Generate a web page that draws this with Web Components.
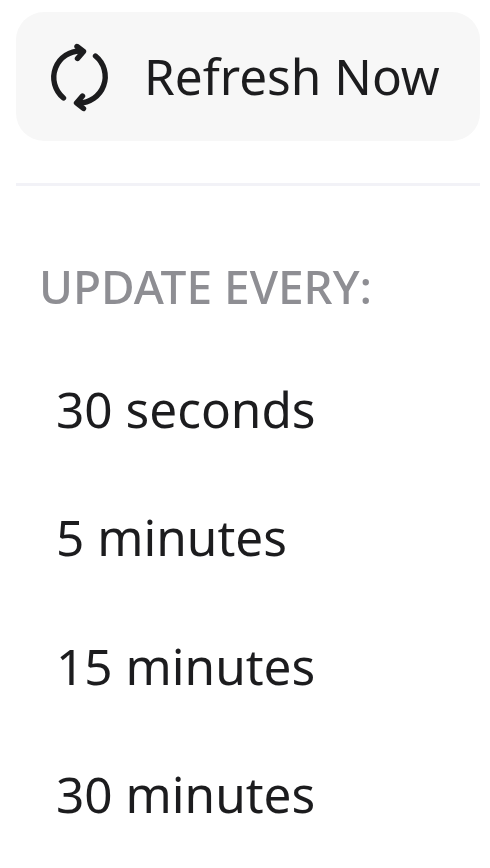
<!doctype html>
<html><head><meta charset="utf-8"><style>
html,body{margin:0;padding:0;background:#fff}
body{font-family:"Noto Sans","Open Sans",sans-serif;color:#1c1c1e;width:490px;height:868px;overflow:hidden}
</style></head><body>
<refresh-menu>
<refresh-button slot="top">Refresh Now</refresh-button>
<section-label>UPDATE EVERY:</section-label>
<menu-item>30 seconds</menu-item>
<menu-item>5 minutes</menu-item>
<menu-item>15 minutes</menu-item>
<menu-item>30 minutes</menu-item>
</refresh-menu>
<script>
function def(name,html){customElements.define(name,class extends HTMLElement{constructor(){super();this.attachShadow({mode:"open"}).innerHTML=html}})}
def("refresh-menu",`<style>:host{display:flex;flex-direction:column;padding:12px 10px 0 16px;will-change:transform}
.rule{height:3px;background:#f2f2f7;margin:42px 0 0}
.rest{display:flex;flex-direction:column}</style><slot name="top"></slot><div class="rule"></div><div class="rest"><slot></slot></div>`);
def("refresh-button",`<style>:host{display:flex;align-items:center;box-sizing:border-box;height:129px;padding:0 0 2px 32px;background:#f7f7f7;border-radius:28px;gap:32px;font-size:49.5px;letter-spacing:0}
svg{width:64px;height:72px;flex:none}</style>
<svg viewBox="47.500 39 64 72" fill="none" stroke="#1c1c1e" stroke-width="5.4" stroke-linecap="round" stroke-linejoin="round">
<path d="M63 97A26.500 26.500 0 0 1 81 50"/><path d="M95 55A26.500 26.500 0 0 1 78 102"/>
<path d="M76.500 45.500L83 50.500L77 57.500"/><path d="M83 107.500L76 102L82 95"/></svg><slot></slot>`);
def("section-label",`<style>:host{display:block;font-size:46px;font-weight:500;color:#8e8e93;line-height:60px;padding:70px 0 29px 23px}</style><slot></slot>`);
def("menu-item",`<style>:host{display:flex;align-items:center;height:128.3px;padding-left:40px;font-size:49.5px}</style><slot></slot>`);
</script></body></html>
